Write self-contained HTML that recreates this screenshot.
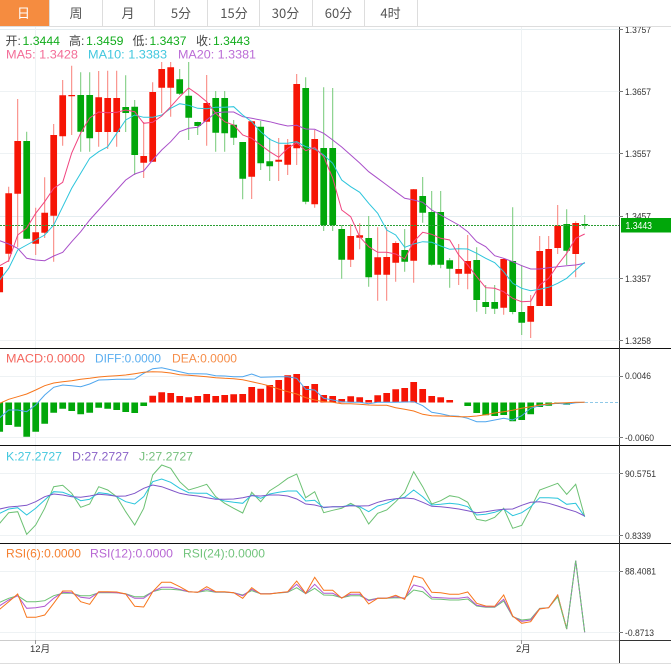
<!DOCTYPE html>
<html>
<head>
<meta charset="utf-8">
<style>
html,body{margin:0;padding:0;background:#fff;width:671px;height:670px;overflow:hidden}
svg{display:block}
text{font-family:"Liberation Sans","Noto Sans CJK SC",sans-serif}
.l{fill:none;stroke-width:1}
.ax{font-size:9.5px;fill:#333}
.t{font-size:13px;fill:#555;text-anchor:middle;font-family:"Noto Sans CJK SC","Liberation Sans",sans-serif}
.h{font-size:12px}
</style>
</head>
<body>
<svg width="671" height="670" viewBox="0 0 671 670" xmlns="http://www.w3.org/2000/svg">
<rect width="671" height="670" fill="#fff"/>
<!-- grid -->
<path d="M0 29.5H619M0 216.5H619M0 278.5H619" stroke="#e4edf0" stroke-width="1" fill="none"/>
<path d="M0 91.5H619M0 153.5H619M0 340.5H619M0 376.5H619M0 437.5H619M0 473.5H619M0 535.5H619M0 571.5H619M0 632.5H619M35.5 27V640M521.5 27V640" stroke="#eef2f4" stroke-width="1" fill="none"/>
<!-- wicks -->
<path fill="none" stroke="#f97f78" stroke-width="1" d="M8.7 186.7V262M17.7 99V247M35.7 207.7V255M44.7 177.3V238M53.7 124V261.7M62.7 80V145.7M71.7 65.7V135M98.7 71V146.7M107.7 70.7V149M116.7 70.7V146.7M143.7 122V178M152.7 82.3V162M161.7 62V113M170.7 62V116.7M206.7 75V145.7M251.7 120.7V199M278.7 138V181M287.7 139V175M296.7 74V165M314.7 130V207.7M350.7 224.3V267M359.7 223.3V249.3M377.7 227.3V300.7M386.7 227.3V300.7M395.7 241.3V281.7M413.7 189V282.7M458.7 244V285M467.7 235V289.3M503.7 258V314.7M530.7 295V338M539.7 236V306M548.7 236V306M557.7 205V254M575.7 221.3V277.3"/>
<path fill="none" stroke="#74c977" stroke-width="1" d="M26.7 131.7V239M80.7 72.3V151.7M89.7 72.3V151.7M125.7 75.3V132M134.7 100V175M179.7 69V95M188.7 62V140M197.7 121.7V135M215.7 91V151.7M224.7 91V151.7M233.7 120V145M242.7 142V199.3M260.7 121V170M269.7 138V181M305.7 77.3V204.3M323.7 87.3V231M332.7 88V231M341.7 225V278.7M368.7 216V286.7M404.7 229V271.7M422.7 177V222.7M431.7 191V265.7M440.7 191V268.3M449.7 258V287.7M476.7 247.3V311.7M485.7 285V314M494.7 285V314M512.7 207.3V314.3M521.7 265V335M566.7 209.3V265M584.7 215V229"/>
<!-- bodies -->
<path fill="none" stroke="#f61505" stroke-width="6.7" d="M-.3 267V292.3M8.7 193.3V253.7M17.7 141V193.7M35.7 232.3V243.7M44.7 212.7V232.7M53.7 135V215.7M62.7 95.3V136.3M71.7 95V96.2M98.7 97.3V132M107.7 98V132M116.7 98V132M143.7 156V162.7M152.7 92V161.7M161.7 69V87.7M170.7 67.3V87.7M206.7 103V121.7M251.7 121.3V176.7M278.7 159.7V161.7M287.7 144.7V164.7M296.7 84V148.3M314.7 139V204.3M350.7 236V259.7M359.7 235.3V237.7M377.7 257.3V274.7M386.7 257V274.7M395.7 243V262.7M413.7 189.3V260.7M458.7 269V273.7M467.7 261V273.7M503.7 259V307.7M530.7 306V321.7M539.7 251V306M548.7 249V306M557.7 225.7V248M575.7 223V254"/>
<path fill="none" stroke="#01a70a" stroke-width="6.7" d="M26.7 141V238.7M80.7 95V131.7M89.7 95V138.3M125.7 107V113M134.7 106.7V155M179.7 79.3V93.7M188.7 95.7V117.7M197.7 122V126M215.7 98V132.7M224.7 98V133.3M233.7 124.7V137.7M242.7 142V178.7M260.7 126.7V163.3M269.7 161.3V166.3M305.7 88V201.7M323.7 148V225M332.7 148V225M341.7 229V259.7M368.7 238V277.3M404.7 250V261.7M422.7 196V212.7M431.7 212V264.7M440.7 212V264.7M449.7 260.3V268.7M476.7 260V300M485.7 302V307M494.7 302V308.7M512.7 261V312M521.7 312V322.7M566.7 224V250.7M584.7 224V225.3"/>
<!-- dotted last price -->
<path d="M0 225.5H621" stroke="#2a9e33" stroke-width="1" stroke-dasharray="2 1" fill="none"/>
<!-- MA lines -->
<polyline class="l" stroke="#a94fc9" points="-0.3,240.7 8.7,244 17.7,248.3 26.7,258.3 35.7,260 44.7,260.7 53.7,256 62.7,252.3 71.7,241.7 80.7,231.7 89.7,220 98.7,210 107.7,200 116.7,190 125.7,180 134.7,174 143.7,171 152.7,160 161.7,150 170.7,141.7 179.7,131.7 188.7,128.3 197.7,127.3 206.7,120 215.7,112.7 224.7,112 233.7,112 242.7,116.7 251.7,118.3 260.7,120 269.7,121.7 278.7,124 287.7,126 296.7,125.3 305.7,129 314.7,129.3 323.7,133.3 332.7,140 341.7,147 350.7,155 359.7,163 368.7,171.7 377.7,178.3 386.7,185 395.7,191.7 404.7,198.3 413.7,200 422.7,202.3 431.7,210 440.7,215 449.7,220 458.7,225 467.7,231.7 476.7,241.7 485.7,246.7 494.7,255.7 503.7,258.3 512.7,261.7 521.7,265.7 530.7,269 539.7,269 548.7,267.7 557.7,266.7 566.7,265.7 575.7,265 584.7,263.3"/>
<polyline class="l" stroke="#2cc5dc" points="-0.3,280 8.7,268.3 17.7,250 26.7,245 35.7,240 44.7,235 53.7,225 62.7,206.7 71.7,188.3 80.7,173.3 89.7,158.3 98.7,151.7 107.7,146.7 116.7,133.3 125.7,120 134.7,115 143.7,117.3 152.7,117.3 161.7,115 170.7,108.3 179.7,103.7 188.7,105.3 197.7,108.3 206.7,108.7 215.7,107.3 224.7,107.3 233.7,106.7 242.7,115 251.7,121.7 260.7,131.7 269.7,139.3 278.7,143.3 287.7,143.3 296.7,141.7 305.7,146.7 314.7,149 323.7,155 332.7,163.3 341.7,180 350.7,186.7 359.7,192.3 368.7,203.3 377.7,213.3 386.7,230 395.7,235 404.7,247.3 413.7,244 422.7,241.7 431.7,242.3 440.7,246 449.7,249.3 458.7,248.7 467.7,249 476.7,253.3 485.7,258.3 494.7,262.7 503.7,271.7 512.7,283.3 521.7,288.3 530.7,290.7 539.7,289.3 548.7,287.3 557.7,283.3 566.7,278.3 575.7,270 584.7,262.3"/>
<polyline class="l" stroke="#f0447f" points="-0.3,265.7 8.7,260.7 17.7,235 26.7,228 35.7,213.3 44.7,201.7 53.7,188.3 62.7,182.3 71.7,153 80.7,133 89.7,118 98.7,112 107.7,112.7 116.7,112.3 125.7,110 134.7,111.7 143.7,123.3 152.7,122.3 161.7,116 170.7,106.7 179.7,96.7 188.7,88 197.7,94.3 206.7,101.7 215.7,113.3 224.7,121.7 233.7,125 242.7,135 251.7,138.3 260.7,145 269.7,151.7 278.7,157.3 287.7,148.3 296.7,142.7 305.7,150.7 314.7,147.3 323.7,156.7 332.7,178 341.7,210 350.7,216.7 359.7,236.7 368.7,246.7 377.7,252.3 386.7,252.3 395.7,254 404.7,259 413.7,241.7 422.7,232.3 431.7,234.3 440.7,238.3 449.7,240 458.7,255 467.7,265 476.7,276.7 485.7,287.7 494.7,288.3 503.7,291.7 512.7,298.3 521.7,301.7 530.7,301.3 539.7,285 548.7,278.3 557.7,265 566.7,253.3 575.7,238.3 584.7,234"/>
<!-- MACD -->
<path fill="none" stroke="#01a70a" stroke-width="6.7" d="M-.3 402.5V431.7M8.7 402.5V425M17.7 402.5V426.7M26.7 402.5V436.7M35.7 402.5V431.7M44.7 402.5V423.7M53.7 402.5V412.7M62.7 402.5V408.7M71.7 402.5V411M80.7 402.5V414.3M89.7 402.5V412.7M98.7 402.5V407.7M107.7 402.5V408.7M116.7 402.5V410M125.7 402.5V412M134.7 402.5V413M143.7 402.5V406M467.7 402.5V406M476.7 402.5V413M485.7 402.5V415.3M494.7 402.5V416M503.7 402.5V415M512.7 402.5V421.3M521.7 402.5V420M530.7 402.5V414.3M539.7 402.5V407M548.7 402.5V405.7M557.7 402.5V404M566.7 402.5V404.7"/>
<path fill="none" stroke="#f61505" stroke-width="6.7" d="M152.7 402.5V395.7M161.7 402.5V392.3M170.7 402.5V393M179.7 402.5V396M188.7 402.5V397.3M197.7 402.5V396M206.7 402.5V394M215.7 402.5V396M224.7 402.5V395M233.7 402.5V394.3M242.7 402.5V394M251.7 402.5V387M260.7 402.5V388.7M269.7 402.5V385M278.7 402.5V380M287.7 402.5V375.3M296.7 402.5V374M305.7 402.5V386M314.7 402.5V384M323.7 402.5V395M332.7 402.5V396M341.7 402.5V399M350.7 402.5V396.3M359.7 402.5V397.3M368.7 402.5V400M377.7 402.5V395.3M386.7 402.5V393M395.7 402.5V389.3M404.7 402.5V388M413.7 402.5V382M422.7 402.5V389M431.7 402.5V396M440.7 402.5V397.3M449.7 402.5V400"/>
<path d="M585 402.5H619" stroke="#8fc9e8" stroke-width="1" stroke-dasharray="3 2" fill="none"/>
<polyline class="l" stroke="#4fa6ee" points="-0.3,417.7 8.7,410 17.7,410 26.7,411.7 35.7,405 44.7,395 53.7,387.3 62.7,385 71.7,385.7 80.7,386.7 89.7,384 98.7,380 107.7,379.7 116.7,379.3 125.7,379.3 134.7,379 143.7,373.3 152.7,368.7 161.7,367.7 170.7,369.7 179.7,371.7 188.7,373.7 197.7,373.7 206.7,374 215.7,375.7 224.7,376 233.7,376.7 242.7,376.7 251.7,374 260.7,377.3 269.7,377 278.7,376.7 287.7,376.7 296.7,378.3 305.7,389.3 314.7,390 323.7,398.3 332.7,400 341.7,401.7 350.7,402.3 359.7,402.3 368.7,403.7 377.7,402.3 386.7,402.3 395.7,402.3 404.7,402 413.7,401.7 422.7,405.7 431.7,412.3 440.7,413.7 449.7,415.7 458.7,416.3 467.7,418.3 476.7,421.7 485.7,421.7 494.7,420 503.7,418.3 512.7,420 521.7,415.7 530.7,408.3 539.7,405.7 548.7,404.3 557.7,403.3 566.7,404.3 575.7,402.7 584.7,402.3"/>
<polyline class="l" stroke="#f7761c" points="-0.3,403.3 8.7,399.3 17.7,396.7 26.7,394 35.7,390 44.7,385.7 53.7,383 62.7,381.7 71.7,380.7 80.7,379.3 89.7,378.3 98.7,377 107.7,376.3 116.7,375.7 125.7,375 134.7,373.7 143.7,372.3 152.7,371.7 161.7,372 170.7,373 179.7,374.7 188.7,375.3 197.7,376 206.7,376.7 215.7,377.7 224.7,378.3 233.7,378.7 242.7,379.7 251.7,381.7 260.7,383.7 269.7,386 278.7,389 287.7,391.7 296.7,394 305.7,397.7 314.7,400 323.7,401.7 332.7,402.3 341.7,403.7 350.7,403.7 359.7,404.3 368.7,405 377.7,405.3 386.7,405.3 395.7,407.7 404.7,409.3 413.7,411 422.7,414.3 431.7,415.7 440.7,416 449.7,416.3 458.7,416.7 467.7,416.7 476.7,416 485.7,414.7 494.7,413 503.7,411.7 512.7,410.3 521.7,408.3 530.7,406.7 539.7,405 548.7,404 557.7,403 566.7,402.7 575.7,402.3 584.7,402.3"/>
<!-- KDJ -->
<polyline class="l" stroke="#6cc173" points="-0.3,523.3 8.7,512.7 17.7,511.7 26.7,534.3 35.7,525 44.7,508.3 53.7,486.7 62.7,485.3 71.7,493.3 80.7,507.3 89.7,504 98.7,486.7 107.7,490 116.7,496.7 125.7,511.7 134.7,525 143.7,508.3 152.7,475 161.7,465 170.7,468.3 179.7,481.7 188.7,490 197.7,487.3 206.7,484.3 215.7,496.7 224.7,503.3 233.7,508.3 242.7,513 251.7,492.3 260.7,501.7 269.7,490.7 278.7,485 287.7,478.3 296.7,474 305.7,497.7 314.7,491.7 323.7,512.7 332.7,510.3 341.7,508.3 350.7,503.3 359.7,508.3 368.7,524 377.7,513.3 386.7,510 395.7,501.7 404.7,492.3 413.7,471.7 422.7,486.7 431.7,504 440.7,500.7 449.7,495.7 458.7,497.3 467.7,502.3 476.7,519.3 485.7,521 494.7,517.3 503.7,508.3 512.7,528.3 521.7,525.3 530.7,508.3 539.7,490 548.7,486.7 557.7,483.3 566.7,494.3 575.7,484.3 584.7,516.7"/>
<polyline class="l" stroke="#2ac5dc" points="-0.3,513.3 8.7,509 17.7,507.7 26.7,515 35.7,508.3 44.7,500 53.7,491.7 62.7,492.3 71.7,495.7 80.7,500.7 89.7,499.3 98.7,492.7 107.7,493.7 116.7,496.7 125.7,501.7 134.7,504 143.7,496.7 152.7,481.7 161.7,479 170.7,482.3 179.7,488.3 188.7,492.7 197.7,493.3 206.7,493.3 215.7,498.3 224.7,501 233.7,502.3 242.7,503.3 251.7,495 260.7,498.3 269.7,494 278.7,492.3 287.7,491 296.7,491 305.7,501 314.7,500.3 323.7,507.7 332.7,506.7 341.7,506.7 350.7,505 359.7,506.7 368.7,511.7 377.7,506 386.7,503.3 395.7,499 404.7,497.3 413.7,490 422.7,496.7 431.7,505 440.7,504.3 449.7,503.3 458.7,504.3 467.7,506.7 476.7,515 485.7,514.3 494.7,512.3 503.7,509 512.7,515.7 521.7,512.7 530.7,506.7 539.7,497.7 548.7,497.7 557.7,498.3 566.7,504.3 575.7,503.3 584.7,516.7"/>
<polyline class="l" stroke="#7f55c8" points="-0.3,509 8.7,507 17.7,506.3 26.7,505.3 35.7,501.7 44.7,496.7 53.7,494 62.7,495 71.7,496.7 80.7,497.3 89.7,496 98.7,494.3 107.7,495 116.7,496.3 125.7,496 134.7,493.3 143.7,488.3 152.7,485 161.7,486.7 170.7,490 179.7,493.3 188.7,495 197.7,496 206.7,497.7 215.7,499.3 224.7,499.3 233.7,499 242.7,497.7 251.7,495.7 260.7,496 269.7,495 278.7,495 287.7,496 296.7,499 305.7,504 314.7,505 323.7,507.3 332.7,506.7 341.7,506.7 350.7,505.7 359.7,506 368.7,505.7 377.7,502.3 386.7,500 395.7,498.7 404.7,498 413.7,498.7 422.7,502.3 431.7,506.3 440.7,506.7 449.7,507.7 458.7,509 467.7,510.7 476.7,512.7 485.7,511.7 494.7,510.3 503.7,509.3 512.7,509 521.7,505.3 530.7,502.3 539.7,501.7 548.7,503.3 557.7,506 566.7,509 575.7,511.7 584.7,516"/>
<!-- RSI -->
<polyline class="l" stroke="#6cc173" points="-0.3,602.3 8.7,598.3 17.7,595.7 26.7,601.7 35.7,601.7 44.7,600.7 53.7,595.7 62.7,593.3 71.7,593.3 80.7,595.7 89.7,595.7 98.7,592.7 107.7,592.7 116.7,592.7 125.7,593.7 134.7,596.7 143.7,596.7 152.7,591.7 161.7,589.3 170.7,589.3 179.7,590 188.7,591.7 197.7,592.3 206.7,590.7 215.7,592.3 224.7,592.3 233.7,592.7 242.7,595 251.7,590.7 260.7,593.7 269.7,593.7 278.7,593 287.7,592.3 296.7,587.7 305.7,593.7 314.7,588.3 323.7,595 332.7,595.3 341.7,597.7 350.7,595.7 359.7,595.7 368.7,600 377.7,598.3 386.7,598.3 395.7,597.7 404.7,598 413.7,590 422.7,591.7 431.7,599 440.7,599.3 449.7,600 458.7,600 467.7,599 476.7,606 485.7,607.3 494.7,607.3 503.7,601 512.7,616.7 521.7,620 530.7,619 539.7,608.3 548.7,607.7 557.7,596.7 566.7,629 575.7,560.7 584.7,632.3"/>
<polyline class="l" stroke="#b258d0" points="-0.3,605.7 8.7,600 17.7,595.7 26.7,608.3 35.7,607.7 44.7,606.3 53.7,598.3 62.7,592.3 71.7,592.7 80.7,597.3 89.7,598.3 98.7,592.3 107.7,592.3 116.7,592.7 125.7,594 134.7,598.3 143.7,598.3 152.7,591.7 161.7,587.3 170.7,587.3 179.7,589.3 188.7,591.7 197.7,592.3 206.7,589 215.7,592 224.7,592 233.7,592.7 242.7,595.7 251.7,589.3 260.7,593.7 269.7,593.7 278.7,592.7 287.7,592 296.7,584.3 305.7,593.7 314.7,584.3 323.7,593.3 332.7,593.3 341.7,597.7 350.7,594.3 359.7,594.3 368.7,600.7 377.7,598.3 386.7,598 395.7,596.7 404.7,598.3 413.7,585 422.7,587.3 431.7,597.3 440.7,597.7 449.7,598.3 458.7,598.3 467.7,597 476.7,605.3 485.7,606.7 494.7,606.7 503.7,599.3 512.7,616.3 521.7,621.3 530.7,620 539.7,608.7 548.7,607.7 557.7,595 566.7,629 575.7,560.7 584.7,632.3"/>
<polyline class="l" stroke="#f7761c" points="-0.3,609.3 8.7,601.7 17.7,594 26.7,617.3 35.7,617.3 44.7,615 53.7,603.3 62.7,591 71.7,591 80.7,601.7 89.7,604.3 98.7,591.7 107.7,591.7 116.7,592 125.7,594 134.7,606.3 143.7,607 152.7,591.7 161.7,582.3 170.7,582.3 179.7,586.7 188.7,591.7 197.7,592.3 206.7,586.7 215.7,591.7 224.7,591.7 233.7,592.7 242.7,598.3 251.7,587.7 260.7,594 269.7,594 278.7,592.7 287.7,591.7 296.7,581 305.7,593.3 314.7,577.3 323.7,590.3 332.7,590.3 341.7,598.3 350.7,592.3 359.7,592.3 368.7,604 377.7,598.3 386.7,598.3 395.7,595.3 404.7,599.3 413.7,576 422.7,578.3 431.7,592.3 440.7,592.7 449.7,594.3 458.7,594.3 467.7,592 476.7,603.3 485.7,606 494.7,606.3 503.7,595 512.7,616 521.7,623.3 530.7,621.7 539.7,609 548.7,607.7 557.7,595 566.7,629"/>
<polyline class="l" stroke="#6cc173" stroke-dasharray="6 1" points="557.7,596.7 566.7,629 575.7,560.7 584.7,632.3"/>
<!-- panel borders -->
<path d="M0 348.5H671M0 445.5H671M0 543.5H671" stroke="#111" stroke-width="1" fill="none"/>
<path d="M0 640.5H619" stroke="#ccc" stroke-width="1" fill="none"/>
<path d="M619 640.5H671" stroke="#333" stroke-width="1" fill="none"/>
<path d="M0 663.5H671" stroke="#ddd" stroke-width="1" fill="none"/>
<path d="M35.5 640V644M521.5 640V644" stroke="#999" stroke-width="1" fill="none"/>
<path d="M619.5 27V663" stroke="#333" stroke-width="1" fill="none"/>
<path d="M619 29.5H623M619 91.5H623M619 153.5H623M619 216.5H623M619 278.5H623M619 340.5H623M619 376.5H623M619 437.5H623M619 473.5H623M619 535.5H623M619 571.5H623M619 632.5H623" stroke="#777" stroke-width="1" fill="none"/>
<!-- axis labels -->
<text class="ax" x="625" y="33" textLength="26" lengthAdjust="spacingAndGlyphs">1.3757</text>
<text class="ax" x="625" y="95" textLength="26" lengthAdjust="spacingAndGlyphs">1.3657</text>
<text class="ax" x="625" y="157" textLength="26" lengthAdjust="spacingAndGlyphs">1.3557</text>
<text class="ax" x="625" y="219.5" textLength="26" lengthAdjust="spacingAndGlyphs">1.3457</text>
<text class="ax" x="625" y="282" textLength="26" lengthAdjust="spacingAndGlyphs">1.3357</text>
<text class="ax" x="625" y="344" textLength="26" lengthAdjust="spacingAndGlyphs">1.3258</text>
<text class="ax" x="625" y="379" textLength="26" lengthAdjust="spacingAndGlyphs">0.0046</text>
<text class="ax" x="625" y="441" textLength="29" lengthAdjust="spacingAndGlyphs">-0.0060</text>
<text class="ax" x="625" y="477" textLength="31" lengthAdjust="spacingAndGlyphs">90.5751</text>
<text class="ax" x="625" y="539" textLength="26" lengthAdjust="spacingAndGlyphs">0.8339</text>
<text class="ax" x="625" y="574.5" textLength="31" lengthAdjust="spacingAndGlyphs">88.4081</text>
<text class="ax" x="625" y="636" textLength="29" lengthAdjust="spacingAndGlyphs">-0.8713</text>
<text x="30" y="652" font-size="9.5" fill="#333">12月</text>
<text x="516" y="652" font-size="9.5" fill="#333">2月</text>
<!-- current price -->
<rect x="621" y="218" width="50" height="14.5" fill="#01a70a"/>
<text x="625.5" y="229" font-size="10" fill="#fff" textLength="26.5" lengthAdjust="spacingAndGlyphs">1.3443</text>
<!-- tabs -->
<rect x="0" y="0" width="671" height="27" fill="#fff"/>
<rect x="0" y="0" width="49" height="26" fill="#f58c40"/>
<path d="M49.5 0V26M102.5 0V26M154.5 0V26M207.5 0V26M259.5 0V26M312.5 0V26M364.5 0V26M417.5 0V26" stroke="#ddd" stroke-width="1" fill="none"/>
<path d="M0 26.5H671" stroke="#ddd" stroke-width="1" fill="none"/>
<text class="t" x="23.5" y="18" style="fill:#fff">日</text>
<text class="t" x="76" y="18">周</text>
<text class="t" x="128" y="18">月</text>
<text class="t" x="181" y="18">5分</text>
<text class="t" x="234" y="18">15分</text>
<text class="t" x="285.5" y="18">30分</text>
<text class="t" x="338.5" y="18">60分</text>
<text class="t" x="390.5" y="18">4时</text>
<!-- OHLC legend -->
<g class="h">
<text x="5.5" y="45" fill="#444">开:</text><text x="22.5" y="45" fill="#12ac1c" textLength="37.5" lengthAdjust="spacingAndGlyphs">1.3444</text>
<text x="69" y="45" fill="#444">高:</text><text x="86" y="45" fill="#12ac1c" textLength="37.5" lengthAdjust="spacingAndGlyphs">1.3459</text>
<text x="132.5" y="45" fill="#444">低:</text><text x="149.5" y="45" fill="#12ac1c" textLength="37" lengthAdjust="spacingAndGlyphs">1.3437</text>
<text x="196" y="45" fill="#444">收:</text><text x="213" y="45" fill="#12ac1c" textLength="37" lengthAdjust="spacingAndGlyphs">1.3443</text>
<text x="6" y="58.5" fill="#f36d98" textLength="72" lengthAdjust="spacingAndGlyphs">MA5: 1.3428</text>
<text x="88" y="58.5" fill="#41c7de" textLength="79" lengthAdjust="spacingAndGlyphs">MA10: 1.3383</text>
<text x="178" y="58.5" fill="#bb6cd6" textLength="78" lengthAdjust="spacingAndGlyphs">MA20: 1.3381</text>
<text x="6" y="362.5" fill="#f4665e" textLength="79" lengthAdjust="spacingAndGlyphs">MACD:0.0000</text>
<text x="95" y="362.5" fill="#5aaef0" textLength="66" lengthAdjust="spacingAndGlyphs">DIFF:0.0000</text>
<text x="172" y="362.5" fill="#f68d48" textLength="65" lengthAdjust="spacingAndGlyphs">DEA:0.0000</text>
<text x="6" y="460.5" fill="#44c8de" textLength="56" lengthAdjust="spacingAndGlyphs">K:27.2727</text>
<text x="72" y="460.5" fill="#8a62c8" textLength="57" lengthAdjust="spacingAndGlyphs">D:27.2727</text>
<text x="139" y="460.5" fill="#76c07e" textLength="54" lengthAdjust="spacingAndGlyphs">J:27.2727</text>
<text x="6" y="557.5" fill="#f58030" textLength="75" lengthAdjust="spacingAndGlyphs">RSI(6):0.0000</text>
<text x="90" y="557.5" fill="#b868d4" textLength="83" lengthAdjust="spacingAndGlyphs">RSI(12):0.0000</text>
<text x="183" y="557.5" fill="#72c47c" textLength="82" lengthAdjust="spacingAndGlyphs">RSI(24):0.0000</text>
</g>
</svg>
</body>
</html>
